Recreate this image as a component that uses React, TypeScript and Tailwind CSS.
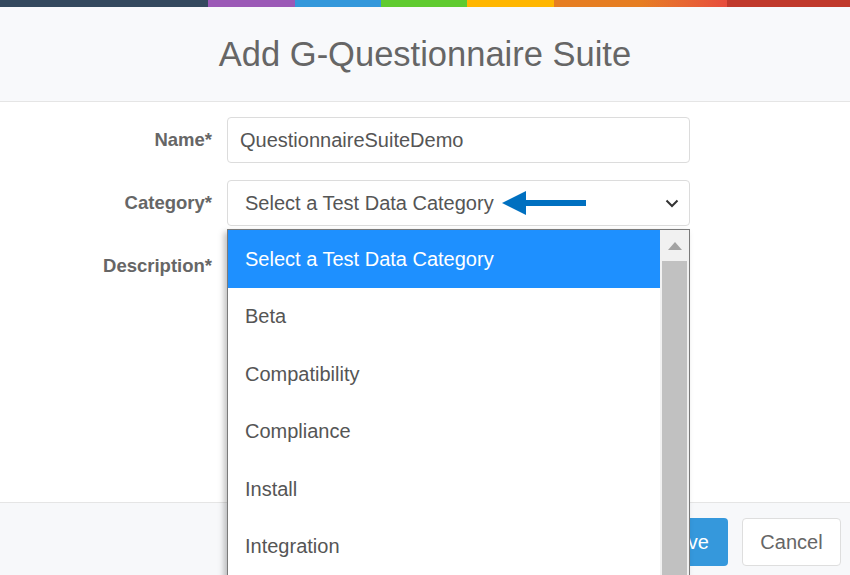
import { useState } from "react";

const categories = [
  "Select a Test Data Category",
  "Beta",
  "Compatibility",
  "Compliance",
  "Install",
  "Integration",
];

const ArrowLeft = () => (
  <svg width="86" height="26" viewBox="0 0 86 26" className="ml-[8px] shrink-0">
    <polygon points="0,13 24,1 24,25" fill="#0070c0" />
    <rect x="22" y="10" width="62" height="6" fill="#0070c0" />
  </svg>
);

const Chevron = () => (
  <svg width="14" height="9" viewBox="0 0 14 9" className="shrink-0">
    <path d="M1.5 1.5 L7 7 L12.5 1.5" fill="none" stroke="#333" strokeWidth="2" />
  </svg>
);

export default function App() {
  const [selected] = useState(0);

  return (
    <div className="w-[850px] h-[575px] overflow-hidden bg-white relative font-['Liberation_Sans',Arial,sans-serif]">
      {/* color strip */}
      <div className="flex h-[7px]">
        <div className="w-[208px] bg-[#34495e]" />
        <div className="w-[87px] bg-[#9b59b6]" />
        <div className="w-[86px] bg-[#3498db]" />
        <div className="w-[86px] bg-[#5fcb2f]" />
        <div className="w-[87px] bg-[#ffb600]" />
        <div className="w-[173px] bg-gradient-to-r from-[#e67e22] via-[#e67e22] to-[#e74c3c]" />
        <div className="flex-1 bg-[#c0392b]" />
      </div>

      {/* header */}
      <div className="h-[95px] bg-[#f8f9fb] border-b border-[#e5e5e5] flex items-center justify-center">
        <h1 className="text-[34.5px] text-[#666] leading-none">Add G-Questionnaire Suite</h1>
      </div>

      {/* body */}
      <div className="h-[400px] pt-[15px]">
        <div className="grid grid-cols-[212px_463px] gap-x-[15px] gap-y-[17px] items-center">
          <label className="text-right text-[18.5px] font-bold text-[#666]">Name*</label>
          <div className="h-[46px] border border-[#dcdcdc] rounded-[4px] flex items-center px-[12px] text-[20px] text-[#555]">
            QuestionnaireSuiteDemo
          </div>

          <label className="text-right text-[18.5px] font-bold text-[#666]">Category*</label>
          <div className="h-[46px] border border-[#dcdcdc] rounded-[4px] flex items-center pl-[17px] pr-[10px] text-[20px] text-[#555]">
            <span>Select a Test Data Category</span>
            <ArrowLeft />
            <div className="flex-1" />
            <Chevron />
          </div>

          <label className="self-start pt-[9px] text-right text-[18.5px] font-bold text-[#666]">Description*</label>
          <div className="h-[130px] border border-[#dcdcdc] rounded-[4px]" />
        </div>
      </div>

      {/* footer */}
      <div className="h-[80px] bg-[#f7f8fa] border-t border-[#e5e5e5] flex justify-end items-start pt-[15px] pr-[9px] gap-[14px]">
        <button className="h-[48px] px-[19px] rounded-[4px] bg-[#3598dc] text-white text-[20px]">Save</button>
        <button className="h-[48px] w-[99px] rounded-[4px] bg-white border border-[#dedede] text-[#666] text-[20px]">Cancel</button>
      </div>

      {/* open dropdown list */}
      <div className="absolute left-[227px] top-[229px] w-[463px] h-[360px] bg-white border border-[#7a7a7a] shadow-[-3px_3px_6px_rgba(0,0,0,0.25)] flex">
        <div className="flex-1 flex flex-col">
          {categories.map((c, i) => (
            <div
              key={c}
              className={
                i === selected
                  ? "h-[57.5px] shrink-0 flex items-center pl-[17px] text-[20px] bg-[#1e90ff] text-white"
                  : "h-[57.5px] shrink-0 flex items-center pl-[17px] text-[20px] text-[#555]"
              }
            >
              {c}
            </div>
          ))}
        </div>
        <div className="w-[29px] bg-[#f1f1f1] flex flex-col items-center">
          <div className="h-[31px] w-full flex items-center justify-center">
            <svg width="14" height="8" viewBox="0 0 14 8">
              <polygon points="7,0 14,8 0,8" fill="#a3a3a3" />
            </svg>
          </div>
          <div className="w-[25px] flex-1 bg-[#c1c1c1]" />
        </div>
      </div>
    </div>
  );
}
